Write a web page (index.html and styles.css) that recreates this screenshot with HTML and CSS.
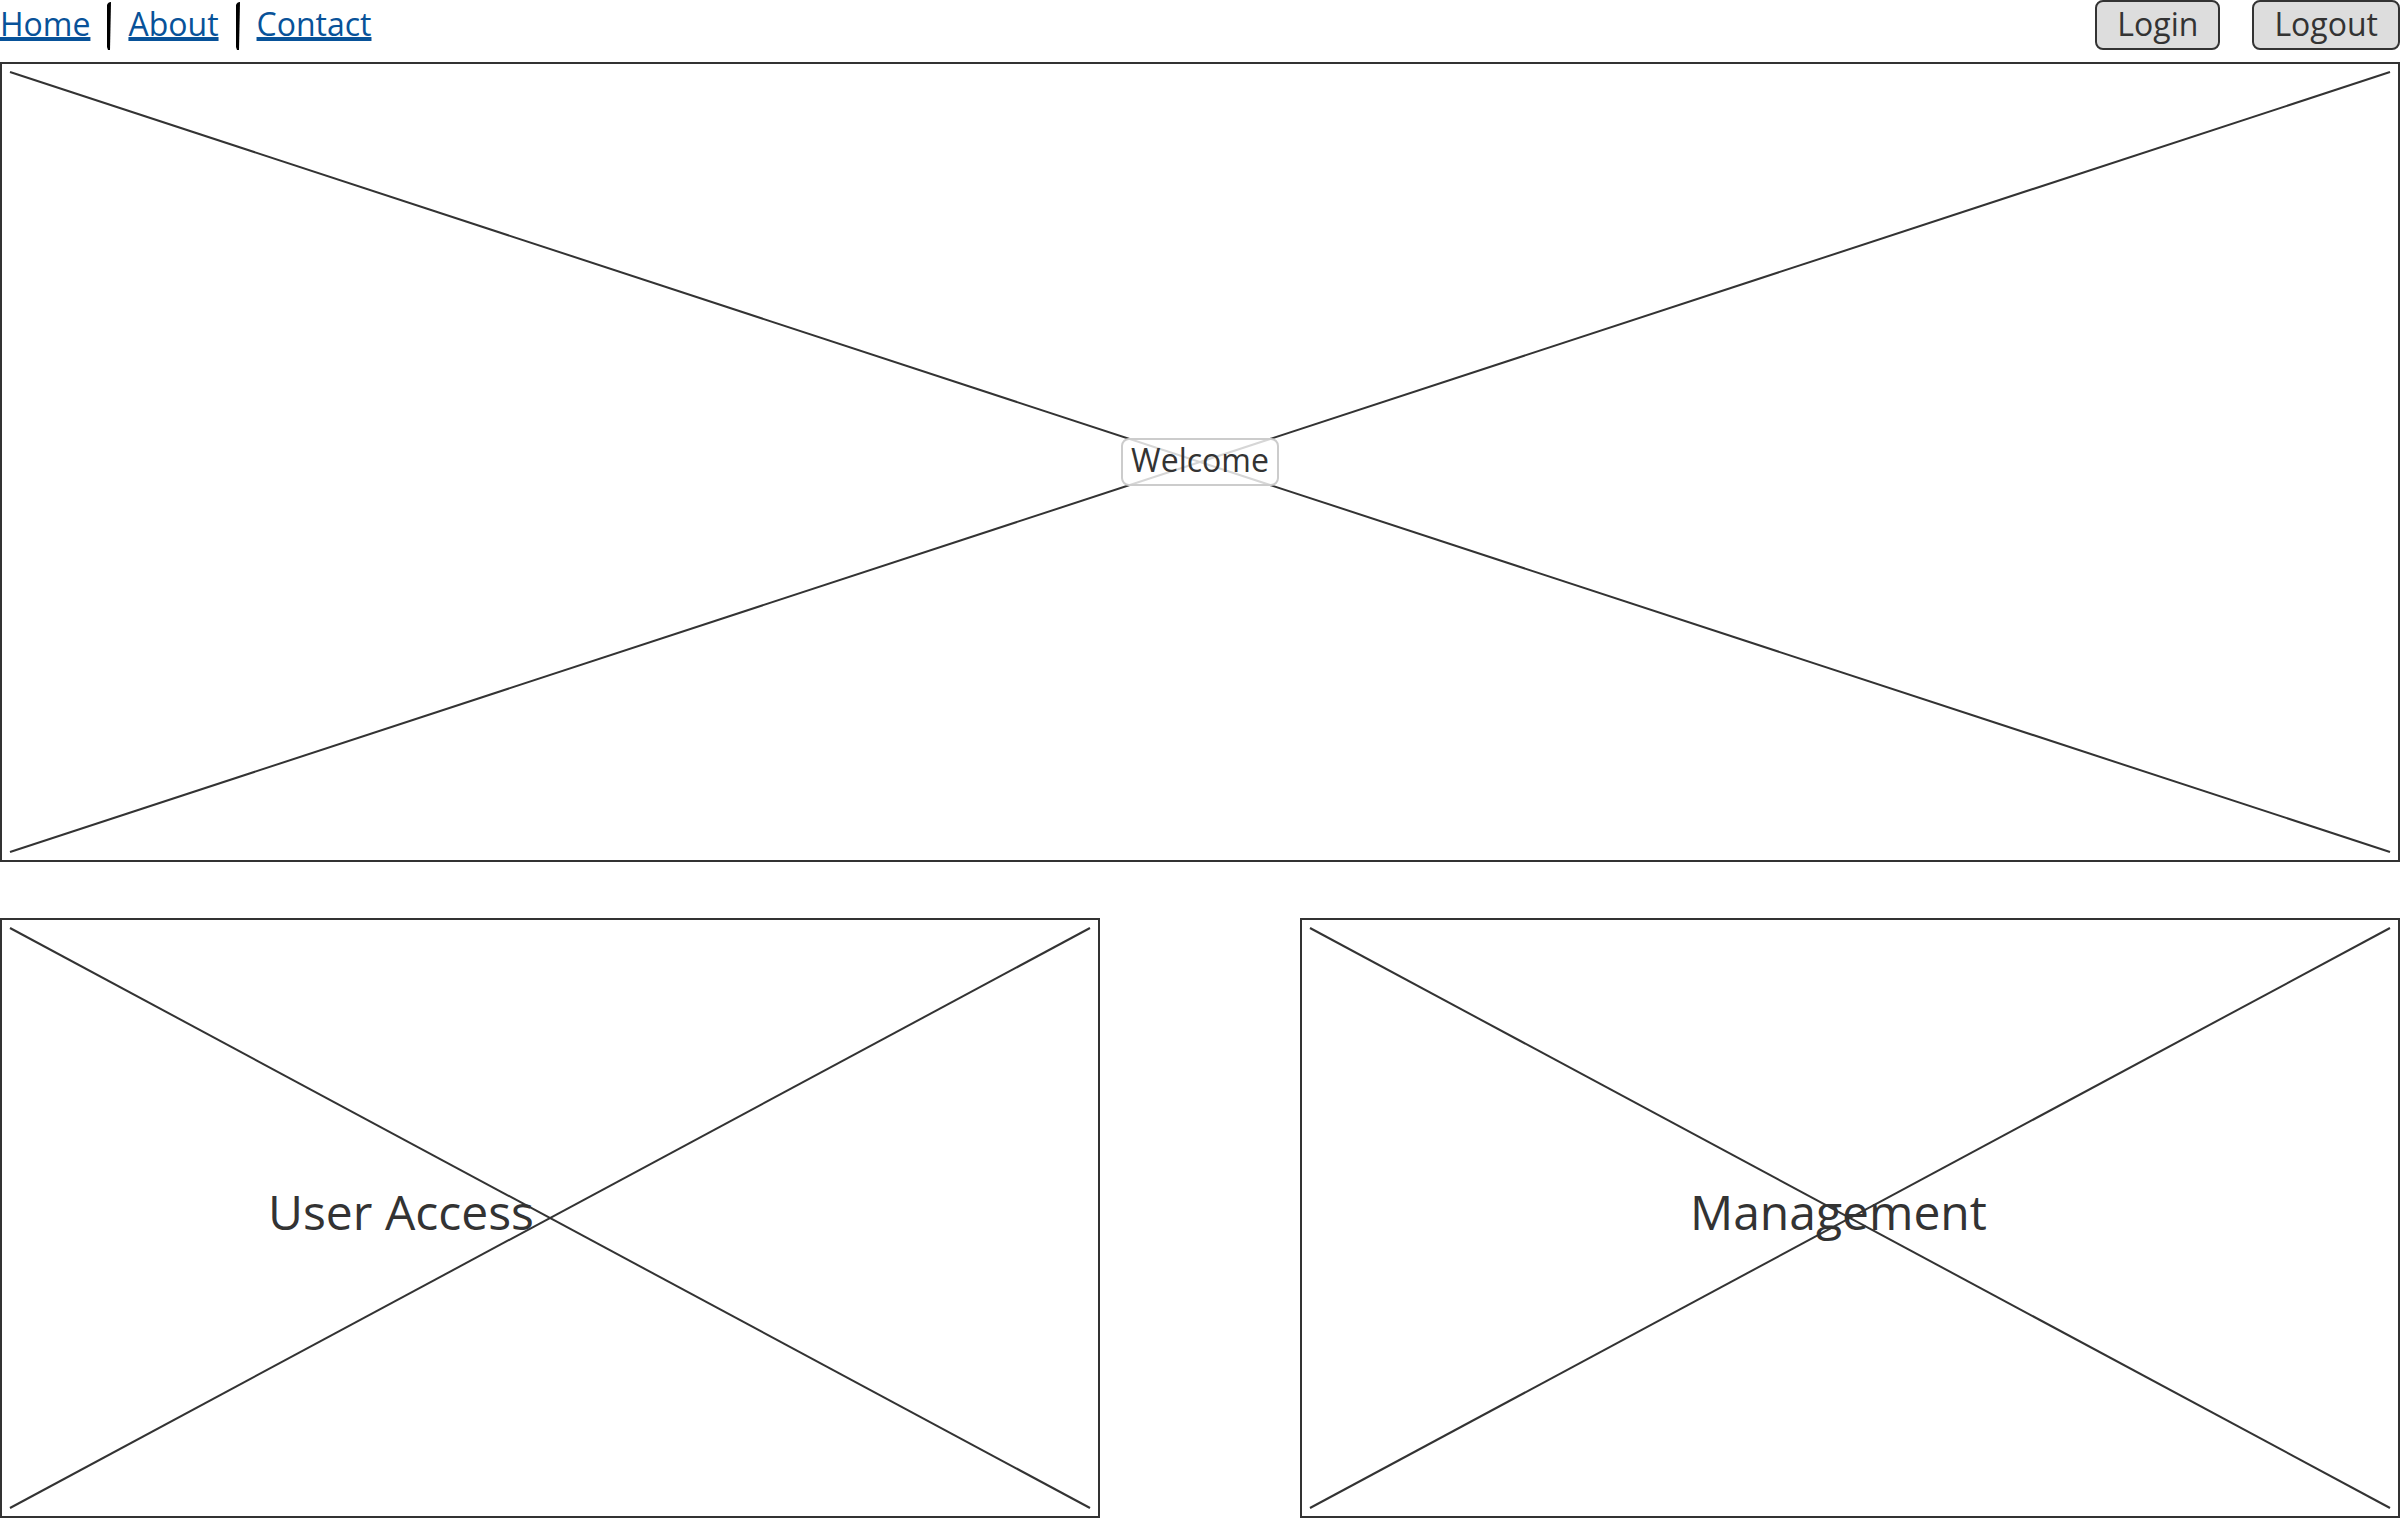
FILE: index.html
```html
<!DOCTYPE html>
<html lang="en">
<head>
<meta charset="utf-8">
<title>Welcome</title>
<link rel="stylesheet" href="styles.css">
</head>
<body>
<header class="topbar">
  <nav class="links">
    <a href="#home">Home</a>
    <svg class="divider" viewBox="0 0 4 48" aria-hidden="true"><path d="M0 3Q1 0 4 0L3 48H1L0 45Z"/></svg>
    <a href="#about">About</a>
    <svg class="divider" viewBox="0 0 4 48" aria-hidden="true"><path d="M0 3Q1 0 4 0L3 48H1L0 45Z"/></svg>
    <a href="#contact">Contact</a>
  </nav>
  <div class="actions">
    <button type="button">Login</button>
    <button type="button">Logout</button>
  </div>
</header>
<main>
  <section class="frame hero">
    <svg class="cross" aria-hidden="true"><line x1="0" y1="0" x2="100%" y2="100%"/><line x1="0" y1="100%" x2="100%" y2="0"/></svg>
    <h1 class="caption">Welcome</h1>
  </section>
  <div class="tiles">
    <section class="frame tile tile-access">
      <svg class="cross" aria-hidden="true"><line x1="0" y1="0" x2="100%" y2="100%"/><line x1="0" y1="100%" x2="100%" y2="0"/></svg>
      <h2 class="title">User Access</h2>
    </section>
    <section class="frame tile tile-management">
      <svg class="cross" aria-hidden="true"><line x1="0" y1="0" x2="100%" y2="100%"/><line x1="0" y1="100%" x2="100%" y2="0"/></svg>
      <h2 class="title">Management</h2>
    </section>
  </div>
</main>
</body>
</html>
```
FILE: styles.css
```css
* {
  box-sizing: border-box;
}

body {
  margin: 0;
  background: #fff;
  color: #333;
  font-family: "Open Sans", "Noto Sans", sans-serif;
  font-size: 32px;
  line-height: 44px;
}

.topbar {
  display: flex;
  justify-content: space-between;
  margin-bottom: 12px;
}

.links {
  display: flex;
  align-items: flex-start;
  gap: 17px;
}

.links a {
  padding-top: 2px;
  color: #085299;
  text-decoration-thickness: 4px;
  text-underline-offset: 1px;
  text-decoration-skip-ink: none;
}

.divider {
  width: 4px;
  height: 48px;
  margin-top: 2px;
  fill: #000;
}

.actions {
  display: flex;
  gap: 32px;
}

.actions button {
  height: 50px;
  padding: 0 20px 4px;
  border: 2px solid #333;
  border-radius: 8px;
  background: #ddd;
  color: inherit;
  font: inherit;
}

.frame {
  position: relative;
  display: flex;
  align-items: center;
  border: 2px solid #333;
}

.cross {
  position: absolute;
  inset: 8px;
  width: calc(100% - 16px);
  height: calc(100% - 16px);
  overflow: visible;
  stroke: #333;
  stroke-width: 2px;
}

.hero {
  justify-content: center;
  aspect-ratio: 3 / 1;
}

.caption {
  position: relative;
  margin: 0;
  padding: 0 8px 4px;
  border: 2px solid #ccc;
  border-radius: 8px;
  background: rgba(255, 255, 255, 0.8);
  font-size: 32px;
  font-weight: 400;
  line-height: 40px;
}

.tiles {
  display: grid;
  grid-template-columns: 1fr 1fr;
  gap: 200px;
  margin-top: 56px;
}

.tile {
  aspect-ratio: 11 / 6;
}

.tile-access {
  padding-left: 266px;
}

.tile-management {
  padding-left: 388px;
}

.title {
  position: relative;
  margin: 0;
  padding-bottom: 12px;
  font-size: 48px;
  font-weight: 400;
  line-height: 64px;
}
```
